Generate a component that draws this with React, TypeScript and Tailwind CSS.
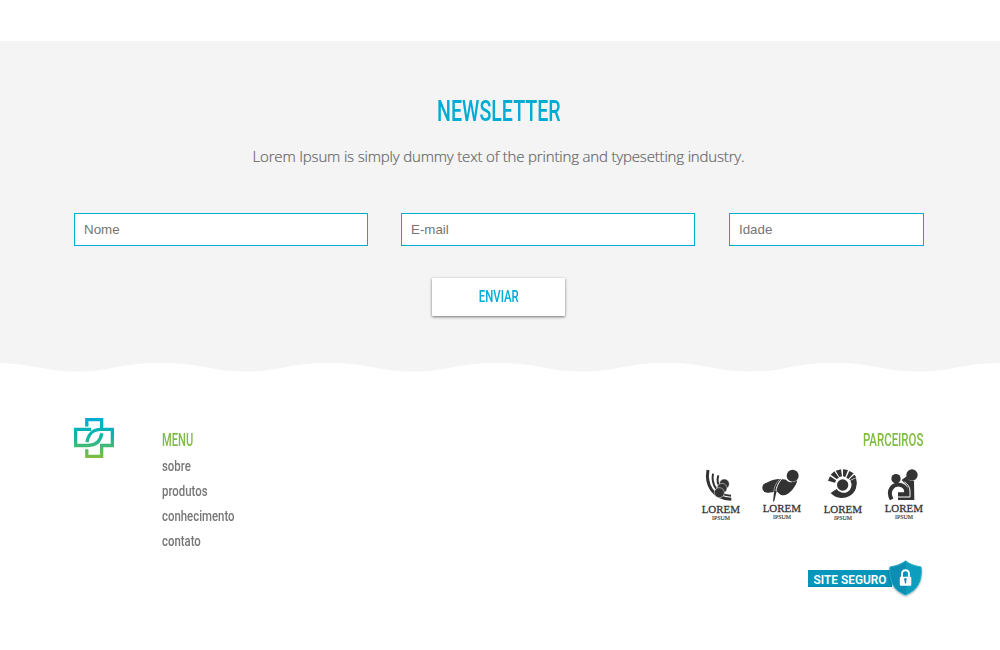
import type { ReactNode } from "react";

const fields = [
  { label: "Nome", width: "w-[294px]" },
  { label: "E-mail", width: "w-[294px] -ml-px" },
  { label: "Idade", width: "w-[195px]" },
];

const links = ["sobre", "produtos", "conhecimento", "contato"];

function Logo() {
  return (
    <svg className="h-10 w-10 shrink-0" viewBox="0 0 40 40" fill="none">
      <defs>
        <linearGradient id="cross" gradientUnits="userSpaceOnUse" x1="0" y1="0" x2="0" y2="40">
          <stop offset="0" stopColor="#00acd8" />
          <stop offset="0.45" stopColor="#0bb5a5" />
          <stop offset="1" stopColor="#84bd41" />
        </linearGradient>
      </defs>
      <g stroke="url(#cross)" strokeWidth="3.3">
        <path d="M12.8 8.4V1.65H27.65V11.6" />
        <path d="M17 11.4H1.65V27.5H14C22 27.5 26.5 23 27.8 15.3" />
        <path d="M26 27.5H38.35V11.4H27C18.5 11.4 14 17 13 24.2" />
        <path d="M12.8 31.2V38.35H27.65V27.5" />
      </g>
    </svg>
  );
}

function Partner({ x, base, children }: { x: number; base: number; children: ReactNode }) {
  return (
    <svg className="h-[54px] w-10" viewBox={`${x} 25 120 162`} fill="#333">
      {children}
      <g fontFamily="'Liberation Serif', serif" stroke="#333">
        <text x={x + 2} y={base} fontSize="33.5" textLength="115" lengthAdjust="spacingAndGlyphs" strokeWidth="0.8">LOREM</text>
        <text x={x + 33} y={base + 20} fontSize="18" textLength="54" lengthAdjust="spacingAndGlyphs" strokeWidth="0.4">IPSUM</text>
      </g>
    </svg>
  );
}

function Partners() {
  return (
    <div className="mr-[0.5px] flex gap-[21px]">
      <Partner x={33} base={160}>
        <g fill="none" stroke="#333">
          <path d="M54 31C46 75 68 116 124 119" strokeWidth="9" />
          <path d="M69 42C63 75 82 106 123 108" strokeWidth="6" />
          <path d="M85 47C79 66 86 78 93 84" strokeWidth="6" />
        </g>
        <g stroke="#fff" strokeWidth="1.5">
          <circle cx="103" cy="73" r="15" />
          <circle cx="96" cy="86" r="15" />
          <circle cx="88" cy="99" r="15" />
        </g>
      </Partner>
      <Partner x={215} base={158}>
        <circle cx="231" cy="84" r="15" />
        <circle cx="307" cy="48" r="18" />
        <path d="M229 69C244 60 265 55 287 60C297 71 310 69 321 62C318 79 298 105 281 107C268 107 264 99 259 94L252 124L248 126L251 97C244 98 237 99 232 99Z" />
        <path d="M274 58C262 72 258 84 257 94" fill="none" stroke="#fff" strokeWidth="3" />
        <path d="M268 59C255 72 251 85 250 97" fill="none" stroke="#fff" strokeWidth="1.5" />
      </Partner>
      <Partner x={38} base={161}>
        <circle cx="97" cy="76" r="17" />
        <path d="M120 63L137 55A45 45 0 0 1 61 100L79 88A23 23 0 0 0 120 63Z" />
        <path d="M74 69L53 63L59 50L77 62ZM79 58L61 45L72 35L86 54ZM87 52L76 33L92 29L95 50ZM98 50L98 29L113 31L105 52ZM108 54L117 34L130 41L114 58ZM117 59L132 45L138 53L119 62Z" />
      </Partner>
      <Partner x={221} base={158}>
        <circle cx="305" cy="46" r="17" />
        <circle cx="257" cy="57" r="14" />
        <path d="M274 61L290 49C293 61 300 65 311 64L312 121H263V107H291V80Z" />
        <path d="M244 119C229 91 249 73 267 75C285 77 290 91 287 104H263" fill="none" stroke="#333" strokeWidth="12" />
        <path d="M282 67C291 72 299 82 299 94V112H263" fill="none" stroke="#fff" strokeWidth="3" />
      </Partner>
    </div>
  );
}

function SecureBadge() {
  return (
    <svg className="mt-[38px] h-[38px] w-[116px]" viewBox="0 0 116 38">
      <defs>
        <linearGradient id="shield" x1="0" x2="1">
          <stop offset="0" stopColor="#078fb4" />
          <stop offset="0.5" stopColor="#078fb4" />
          <stop offset="0.5" stopColor="#079dbd" />
          <stop offset="1" stopColor="#079dbd" />
        </linearGradient>
        <filter id="shade" x="-20%" y="-20%" width="140%" height="150%">
          <feDropShadow dx="0" dy="1" stdDeviation="0.8" floodOpacity="0.35" />
        </filter>
      </defs>
      <path d="M0 10H84V27H0Z" fill="#0796bb" />
      <path d="M0 26H84V27H0Z" fill="#0586a8" />
      <text x="5.5" y="23.8" fontFamily="'Roboto', sans-serif" fontWeight="600" fontSize="13.5" fill="#fff" textLength="73" lengthAdjust="spacingAndGlyphs">SITE SEGURO</text>
      <g filter="url(#shade)">
        <path d="M97.5 1C92 5 87 6 82 7C81 18 83 29 97.5 35C112 29 114 18 113 7C108 6 103 5 97.5 1Z" fill="url(#shield)" stroke="#20abc9" strokeWidth="1" />
      </g>
      <path d="M94 17V14C94 9 101 9 101 14V17" fill="none" stroke="#fff" strokeWidth="1.8" />
      <rect x="91.8" y="16.8" width="11.5" height="9" rx="1" fill="#fff" />
      <path d="M96.3 20A1.3 1.3 0 1 1 98.5 20L98 23.5H97Z" fill="#078fb4" />
    </svg>
  );
}

export default function App() {
  return (
    <div className="h-[650px] overflow-hidden bg-white pt-[41px] font-['Roboto',sans-serif]">
      <section className="flex h-[322px] flex-col items-center bg-[#f4f4f4]">
        <h2 className="mt-[52px] mr-[2.5px] h-9 origin-center scale-x-[0.665] text-[29.5px] leading-9 font-medium whitespace-nowrap text-[#00acd4]">NEWSLETTER</h2>
        <p className="mt-[15px] h-[25px] pr-[3px] font-['Open_Sans',sans-serif] text-[15px] leading-6 font-light tracking-[-0.17px] whitespace-nowrap text-[#666] [-webkit-text-stroke:0.2px_#666]">
          Lorem Ipsum is simply dummy text of the printing and typesetting industry.
        </p>
        <form className="mt-11 flex w-[850px] -translate-x-px justify-between">
          {fields.map((field) => (
            <input
              key={field.label}
              placeholder={field.label}
              className={`${field.width} h-[33px] border border-[#00acd0] bg-white px-[9px] font-['Liberation_Sans',sans-serif] text-[13.33px] placeholder:text-[#757575]`}
            />
          ))}
        </form>
        <button className="mt-8 mr-[3px] flex h-[38px] w-[133px] items-center justify-center rounded-[1px] bg-white text-[#00acd4] shadow-[0_1px_3px_rgba(0,0,0,0.55)]">
          <span className="scale-x-[0.67] text-[17px] font-medium">ENVIAR</span>
        </button>
      </section>
      <svg className="block h-[9px] w-full" viewBox="0 0 1000 9" preserveAspectRatio="none" fill="#f4f4f4">
        <path d="M-8 0C34 0 40 8.6 76 8.6S118 0 161 0S209 8.6 245 8.6S287 0 329 0S377 8.6 413 8.6S455 0 498 0S546 8.6 582 8.6S624 0 666 0S714 8.6 750 8.6S792 0 834 0S882 8.6 918 8.6S960 0 1003 0Z" />
      </svg>
      <footer className="mx-auto mt-[46px] flex w-[850px] -translate-x-px items-start">
        <Logo />
        <nav className="ml-[47.5px] pt-[9px]">
          <h3 className="h-[27px] origin-left scale-x-[0.635] text-[17.5px] leading-[26px] font-medium text-[#7ebc42]">MENU</h3>
          <ul>
            {links.map((link) => (
              <li key={link} className="h-[25px] origin-left scale-x-[0.76] text-[15px] leading-[25px] font-medium text-[#777]">{link}</li>
            ))}
          </ul>
        </nav>
        <div className="ml-auto flex flex-col items-end pt-[9px]">
          <h3 className="mr-[0.5px] mb-[15px] h-[26px] origin-right scale-x-[0.655] text-[17.5px] leading-[26px] font-medium text-[#7ebc42]">PARCEIROS</h3>
          <Partners />
          <SecureBadge />
        </div>
      </footer>
    </div>
  );
}
